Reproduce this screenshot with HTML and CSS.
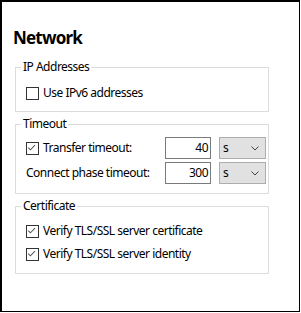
FILE: index.html
```html
<!DOCTYPE html>
<html>
<head>
<meta charset="utf-8">
<link rel="stylesheet" href="styles.css">
</head>
<body>
<div class="frame">
  <h1 class="title">Network</h1>

  <fieldset class="group">
    <legend class="legend">IP Addresses</legend>
    <div class="rows">
      <label class="row"><span class="box"></span><span>Use IPv6 addresses</span></label>
    </div>
  </fieldset>

  <fieldset class="group">
    <legend class="legend">Timeout</legend>
    <div class="grid">
      <label class="row"><span class="box checked"><svg viewBox="0 0 13 13" width="11" height="11"><polyline points="1.5,5.5 4,8 9.5,2.5" fill="none" stroke="#555" stroke-width="1.2"/></svg></span><span>Transfer timeout:</span></label>
      <div class="num">40</div>
      <div class="select"><span>s</span><svg class="chev" viewBox="0 0 8 5" width="8" height="5"><polyline points="0.5,0.5 4,4 7.5,0.5" fill="none" stroke="#444" stroke-width="1"/></svg></div>

      <div class="plain">Connect phase timeout:</div>
      <div class="num">300</div>
      <div class="select"><span>s</span><svg class="chev" viewBox="0 0 8 5" width="8" height="5"><polyline points="0.5,0.5 4,4 7.5,0.5" fill="none" stroke="#444" stroke-width="1"/></svg></div>
    </div>
  </fieldset>

  <fieldset class="group">
    <legend class="legend">Certificate</legend>
    <div class="rows">
      <label class="row"><span class="box checked"><svg viewBox="0 0 13 13" width="11" height="11"><polyline points="1.5,5.5 4,8 9.5,2.5" fill="none" stroke="#555" stroke-width="1.2"/></svg></span><span>Verify TLS/SSL server certificate</span></label>
      <label class="row"><span class="box checked"><svg viewBox="0 0 13 13" width="11" height="11"><polyline points="1.5,5.5 4,8 9.5,2.5" fill="none" stroke="#555" stroke-width="1.2"/></svg></span><span>Verify TLS/SSL server identity</span></label>
    </div>
  </fieldset>
</div>
</body>
</html>
```

FILE: styles.css
```css
html, body {
  margin: 0;
  padding: 0;
  background: #fff;
}

.frame {
  box-sizing: border-box;
  width: 300px;
  height: 312px;
  border-style: solid;
  border-color: #000;
  border-width: 2px 1px 1px 2px;
  padding: 26px 0 0 13px;
  display: flex;
  flex-direction: column;
  font-family: "Noto Sans", "Open Sans", sans-serif;
  font-size: 12px;
  line-height: 16px;
  letter-spacing: -0.5px;
  color: #000;
}

.title {
  margin: 0 0 11px -2px;
  font-size: 17px;
  line-height: 20px;
  font-weight: bold;
  letter-spacing: -0.8px;
}

.group {
  box-sizing: border-box;
  width: 254px;
  margin: 0 0 4px 0;
  padding: 0 5px;
  border: 1px solid #dcdcdc;
  min-width: 0;
}

.legend {
  padding: 0 2px;
  line-height: 16px;
}

.rows {
  margin-left: 5px;
  padding: 8px 0 8px;
  display: flex;
  flex-direction: column;
  gap: 3px;
}

.group:last-child .rows {
  padding: 7px 0 9px;
}

.row {
  display: flex;
  align-items: center;
  gap: 4px;
  height: 20px;
  white-space: nowrap;
}

.box {
  box-sizing: border-box;
  width: 13px;
  height: 13px;
  border: 1px solid #333;
  background: #fff;
  display: flex;
  align-items: center;
  justify-content: center;
  flex: none;
}

.grid {
  margin-left: 5px;
  padding: 5px 0 9px;
  display: grid;
  grid-template-columns: 131px 46px 47px;
  grid-auto-rows: 22px;
  column-gap: 8px;
  row-gap: 3px;
  align-items: center;
}

.grid .row {
  height: 22px;
}

.plain {
  line-height: 22px;
  white-space: nowrap;
}

.num {
  box-sizing: border-box;
  height: 22px;
  border: 1px solid #7a7a7a;
  background: #fff;
  text-align: right;
  padding-right: 2px;
  line-height: 20px;
}

.select {
  box-sizing: border-box;
  height: 22px;
  border: 1px solid #adadad;
  background: #e1e1e1;
  display: flex;
  align-items: center;
  justify-content: space-between;
  padding: 0 6px 0 3px;
  line-height: 20px;
}

.chev {
  display: block;
}
```
